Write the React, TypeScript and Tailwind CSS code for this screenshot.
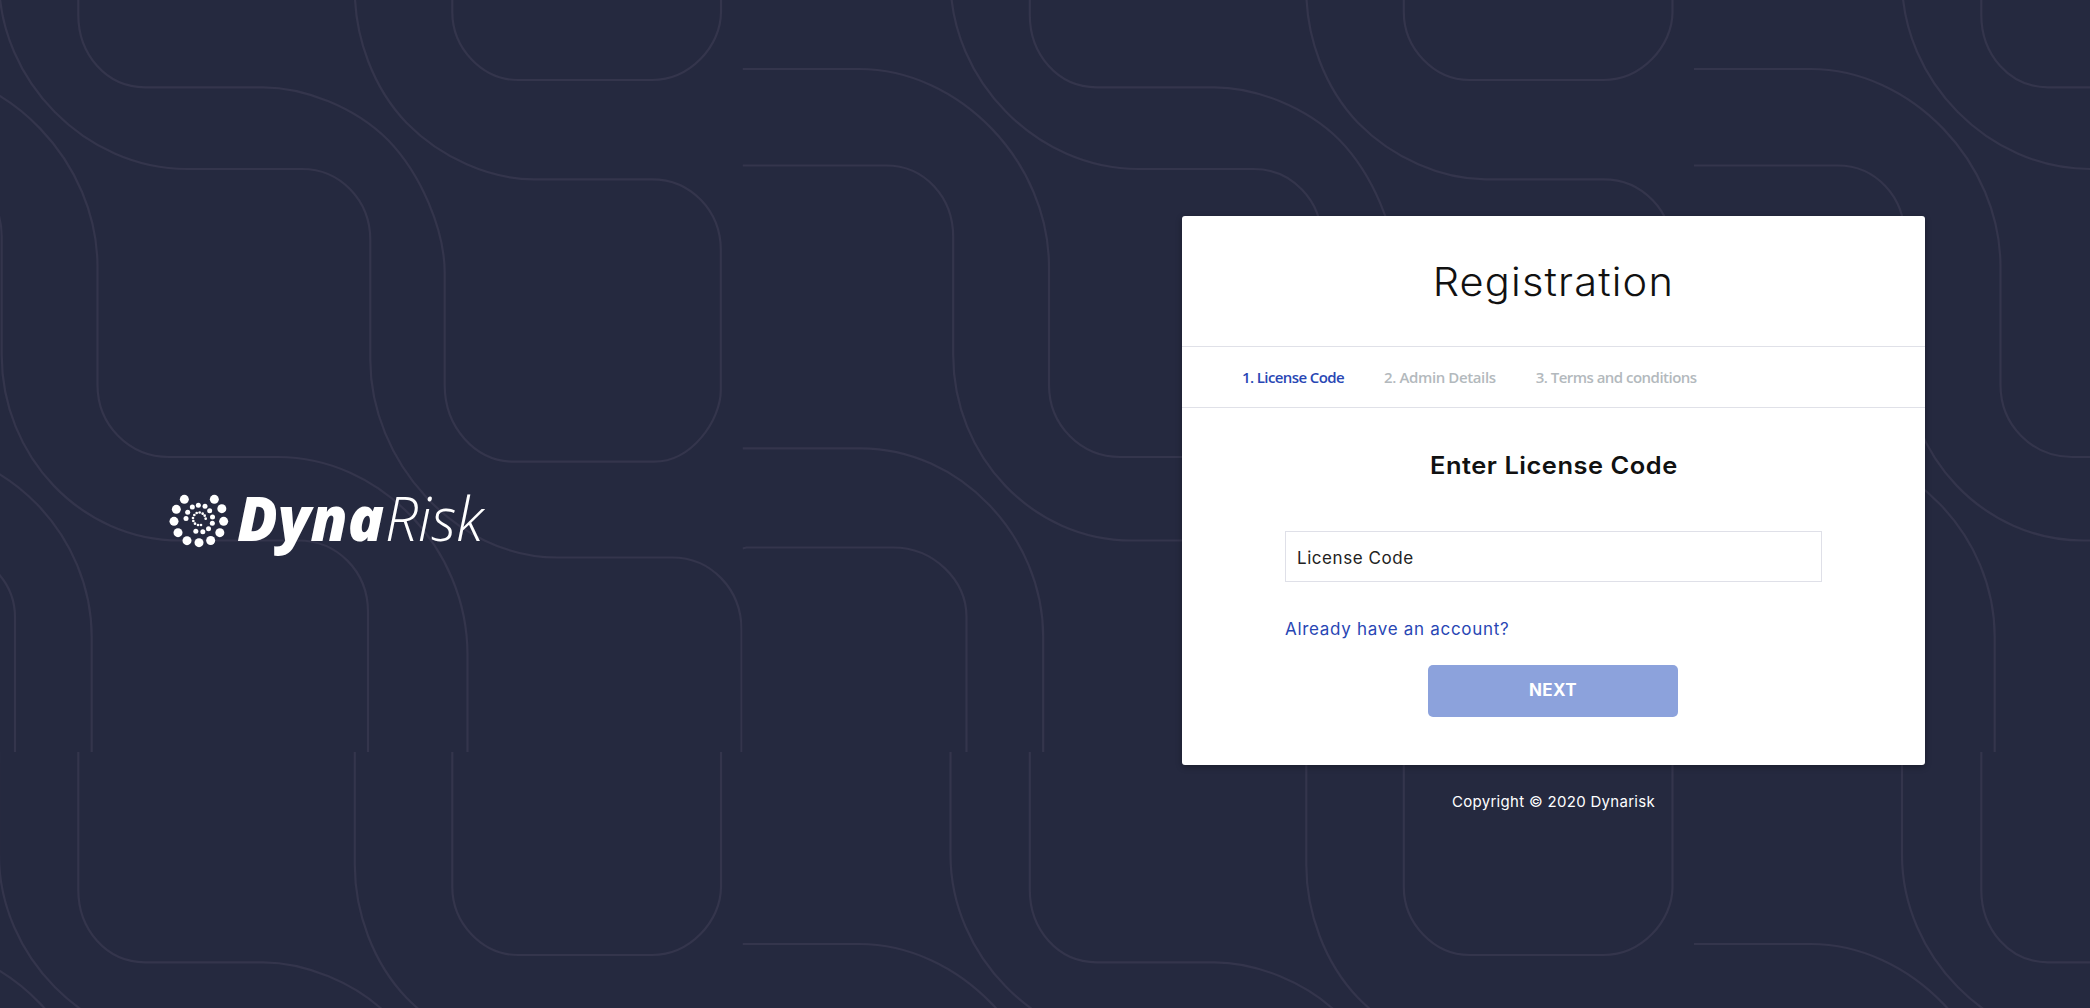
const TILE_W = 951.5;
const TILE_H = 875;

const LINES = [
  "M-209 69H-92.5C8 69 97.5 162 97.5 267V385C97.5 425 129 457 169 457H278C379 457 467.5 547 467.5 655V753",
  "M-209 165.5H-65.5C-27 165.5 1.7 197 1.7 237V355C1.7 456 81 540.5 180 540.5H298C337 540.5 368 571 368 612V753",
  "M-1 -124V-20C-1 80 85 169 187 169H302C340 169 370.3 200 370.3 240V360C370.3 460 455 557.5 557.5 557.5H672C711 557.5 741.5 589 741.5 630V753",
  "M78.3 -124V15C78.3 54 106 87.3 145 87.3H263C304 87.3 355 107 388 140C421 174 444.7 230 444.7 273V385C444.7 426 474 461.7 514.6 461.7H654C692 461.7 720.8 420 720.8 390V250C720.8 211 691 179.3 652 179.3H534C490 179.3 441 158 406.7 123C373 88 354.8 37 354.8 -10V-124",
  "M452.3 -124V12C452.3 48 482 80 518 80H652C690 80 721 46 721 12V-124",
  "M-209 448.3H-90.5C8 448.3 91.7 536 91.7 637V753",
  "M-209 548.5L-205 547.5H-58.5C-18 547.5 15 580 15 617V753",
];

const TILES = [
  [-209, -123],
  [742.5, -123],
  [1694, -123],
  [-209, 752],
  [742.5, 752],
  [1694, 752],
];

function Backdrop() {
  return (
    <svg className="absolute inset-0 h-full w-full" fill="none" aria-hidden="true">
      {TILES.map(([x, y]) => (
        <svg key={`${x},${y}`} x={x} y={y} width={TILE_W} height={TILE_H} viewBox="-209 -123 951.5 875" overflow="hidden">
          {LINES.map((d) => (
            <path key={d} d={d} stroke="#34354c" strokeWidth="2.2" />
          ))}
        </svg>
      ))}
    </svg>
  );
}

const DOTS: [number, number, number][] = [
  [103, 88, 13.5], [193, 88, 13.5], [79, 118, 13.5], [215.5, 116, 13.5], [72, 154, 13.5], [221, 154, 13.5],
  [84, 188, 13.5], [209.5, 188, 13.5], [111, 212, 13.5], [182, 211.5, 13.5], [147, 218, 13.5],
  [145, 105.5, 7.5], [127, 111, 7.5], [165, 108.5, 7.5], [113, 126.5, 7.5], [179, 122, 7.5], [108, 145.5, 7.5],
  [187.5, 141, 7.5], [187, 160, 7.5], [175.5, 176, 7.5], [158.5, 185, 7.5], [137.5, 184, 7.5],
  [149, 127.5, 4], [140, 129, 4], [158, 131, 4], [133, 135, 4], [164, 137, 4], [129, 144, 4], [167, 146, 4],
  [130, 153, 4], [135, 161, 4], [144, 165, 4], [153, 165, 4],
];

function Logo() {
  return (
    <svg className="h-[110px] w-[360px] text-white" viewBox="0 0 360 110" fill="currentColor">
      {DOTS.map(([x, y, r]) => (
        <circle key={`${x},${y}`} cx={x / 3} cy={y / 3} r={r / 3} />
      ))}
      <text x="87" y="71.4" fontSize="62" textLength="147" lengthAdjust="spacingAndGlyphs" className="font-['Open_Sans',sans-serif] font-extrabold italic">
        Dyna
      </text>
      <text x="235" y="71.4" fontSize="61" textLength="98" lengthAdjust="spacingAndGlyphs" className="font-['Open_Sans',sans-serif] font-light italic">
        Risk
      </text>
    </svg>
  );
}

export default function App() {
  return (
    <div className="relative h-[1008px] w-full overflow-hidden bg-[#25293f] font-['Inter',sans-serif]">
      <Backdrop />
      <div className="relative flex h-full">
        <div className="w-[1182px] pt-[470px] pl-[150px]">
          <Logo />
        </div>
        <div className="w-[743px] pt-[216px]">
          <main className="flex h-[549px] flex-col rounded-[3px] bg-white shadow-[0_2px_6px_rgba(0,0,0,0.3)]">
            <h1 className="flex h-[131px] items-center justify-center border-b border-[#e0e1e8] pt-0.5 text-[39px] font-light text-[#111]">
              <span className="inline-block scale-x-[1.065] tracking-[1.1px]">Registration</span>
            </h1>
            <nav className="flex h-[61px] items-center gap-10 border-b border-[#e0e1e8] pl-[60px] font-['Open_Sans',sans-serif] text-[15px] font-semibold text-[#b3b9bd]">
              <span className="tracking-[-0.6px] text-[#2846b4]">1. License Code</span>
              <span className="tracking-[-0.38px]">2. Admin Details</span>
              <span className="tracking-[-0.52px]">3. Terms and conditions</span>
            </nav>
            <form className="flex flex-1 flex-col px-[103px]">
              <h2 className="mt-[42px] h-8 text-center text-2xl leading-8 font-semibold text-[#111]">
                <span className="inline-block scale-x-[1.06] tracking-[0.5px]">Enter License Code</span>
              </h2>
              <input
                placeholder="License Code"
                className="mt-[49px] h-[51px] w-full border border-[#dfe0e8] px-[11px] pt-0.5 text-[17px] tracking-[0.55px] text-[#222] placeholder:text-[#222] placeholder:opacity-100"
              />
              <a className="mt-[35px] h-6 text-[17px] leading-6 text-[#2846b4]">
                <span className="tracking-[0.7px]">Already have an account?</span>
              </a>
              <button type="button" className="mt-6 mr-px h-[52px] w-[250px] self-center rounded-[5px] bg-[#8ca2dc] text-[17px] font-bold tracking-[0.4px] text-white">
                NEXT
              </button>
            </form>
          </main>
          <footer className="mt-[27px] text-center text-[15px] leading-5 font-normal text-white">
            <span className="tracking-[0.3px]">Copyright © 2020 Dynarisk</span>
          </footer>
        </div>
      </div>
    </div>
  );
}
